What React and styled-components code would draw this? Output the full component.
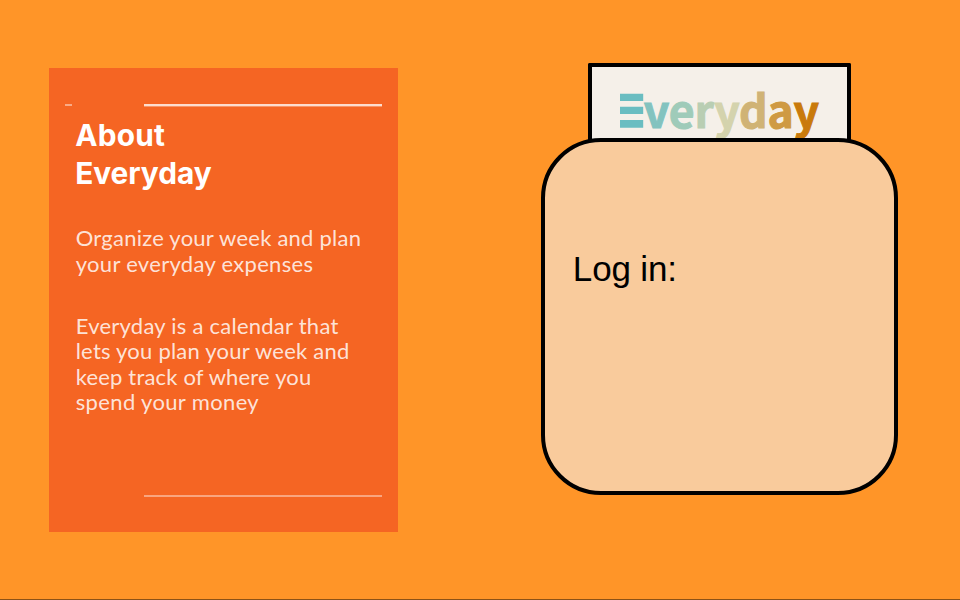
import React from 'react';
import styled, { createGlobalStyle } from 'styled-components';

const GlobalStyle = createGlobalStyle`
  *, *::before, *::after { box-sizing: border-box; }
  body { margin: 0; background: #ff9528; }
`;

const Page = styled.main`
  display: flex;
  justify-content: space-between;
  align-items: flex-start;
  width: 960px;
  height: 600px;
  padding: 63px 61.7px 0 49.3px;
  overflow: hidden;
  background: #ff9528;
  border-bottom: 1px solid #8c5216;
`;

const AboutCard = styled.section`
  display: flex;
  flex-direction: column;
  width: 348.7px;
  height: 464px;
  margin-top: 5px;
  padding: 35px 16px 0;
  background: #f56523;
  color: #fff;
`;

const RuleRow = styled.div`
  display: flex;
  justify-content: space-between;
  align-items: center;
  height: 4px;
`;

const Rule = styled.div`
  width: ${(p) => p.$width}px;
  height: ${(p) => p.$height}px;
  margin-left: auto;
  background: rgba(255, 255, 255, ${(p) => p.$alpha});

  &:first-child:not(:last-child) { margin-left: 0; }
`;

const ThickRule = styled(Rule)`
  border-bottom: 1px solid rgba(245, 101, 35, 0.6);
`;

const Title = styled.h1`
  margin: 10px 0 0 10px;
  font: 700 29.8px/37.5px Inter, sans-serif;
  white-space: nowrap;
`;

const Paragraph = styled.p`
  margin: ${(p) => p.$top}px 0 0 10.4px;
  font: 400 22px/25.65px Lato, sans-serif;
  color: rgba(255, 255, 255, 0.84);
  white-space: nowrap;
`;

const Line = styled.span`
  display: block;
  letter-spacing: ${(p) => p.$spacing || 0}px;
`;

const BottomRow = styled(RuleRow)`
  margin: auto 0 34px;
`;

const Login = styled.section`
  display: flex;
  flex-direction: column;
  align-items: center;
  width: 357.5px;
`;

const LogoTab = styled.header`
  display: flex;
  width: 263px;
  height: 79px;
  padding: 26px 0 0 27.8px;
  border: 4px solid #000;
  border-bottom: 0;
  border-radius: 2px 2px 0 0;
  background: #f5f0e9;
`;

const LogoBars = styled.svg`
  flex: none;
  display: block;
  width: 24px;
  height: 36px;
`;

const Wordmark = styled.div`
  height: 45px;
  margin-top: -7px;
  font: 700 44.5px/45px "Noto Sans CJK SC", sans-serif;
  letter-spacing: ${(p) => p.$spacing}px;
  white-space: nowrap;
`;

const Letter = styled.span`
  color: ${(p) => p.$color};
  -webkit-text-stroke: 1px ${(p) => p.$color};
`;

const Panel = styled.div`
  position: relative;
  width: 357.5px;
  height: 357px;
  margin-top: -4px;
  padding: 107px 0 0 28px;
  border: 4px solid #000;
  border-radius: 60px;
  background: #f9cb9c;
`;

const Prompt = styled.h2`
  margin: 0;
  font: 400 35px/40px "Liberation Sans", Arial, sans-serif;
  letter-spacing: -0.15px;
  color: #000;
`;

const letters = [
  ['v', '#83c3bf'],
  ['e', '#9fcbb9'],
  ['r', '#b9ceb3'],
  ['y', '#d4d3ad'],
  ['d', '#d0b375'],
  ['a', '#cf9a43'],
  ['y', '#c97a0b'],
];

export default function App() {
  return (
    <>
      <GlobalStyle />
      <Page>
        <AboutCard>
          <RuleRow>
            <Rule $width={7} $height={2} $alpha={0.45} />
            <ThickRule $width={238} $height={3} $alpha={0.78} />
          </RuleRow>
          <Title>
            <Line $spacing={0.2}>About</Line>
            <Line $spacing={-0.05}>Everyday</Line>
          </Title>
          <Paragraph $top={33.3}>
            <Line $spacing={0.24}>Organize your week and plan</Line>
            <Line $spacing={0.31}>your everyday expenses</Line>
          </Paragraph>
          <Paragraph $top={35.9}>
            <Line $spacing={0.25}>Everyday is a calendar that</Line>
            <Line $spacing={0.23}>lets you plan your week and</Line>
            <Line $spacing={0.18}>keep track of where you</Line>
            <Line $spacing={0.36}>spend your money</Line>
          </Paragraph>
          <BottomRow>
            <Rule $width={238} $height={2} $alpha={0.42} />
          </BottomRow>
        </AboutCard>
        <Login>
          <LogoTab>
            <LogoBars viewBox="0 0 24 36" aria-label="E">
              <path d="M0 .8h23.2v7.2H0zM0 13.8h23.2v7.3H0zM0 27.1h23.2v7.6H0z" fill="#6abdc1" />
            </LogoBars>
            <Wordmark $spacing={-0.3}>
              {letters.map(([ch, color], i) => (
                <Letter key={i} $color={color}>{ch}</Letter>
              ))}
            </Wordmark>
          </LogoTab>
          <Panel>
            <Prompt>Log in:</Prompt>
          </Panel>
        </Login>
      </Page>
    </>
  );
}
